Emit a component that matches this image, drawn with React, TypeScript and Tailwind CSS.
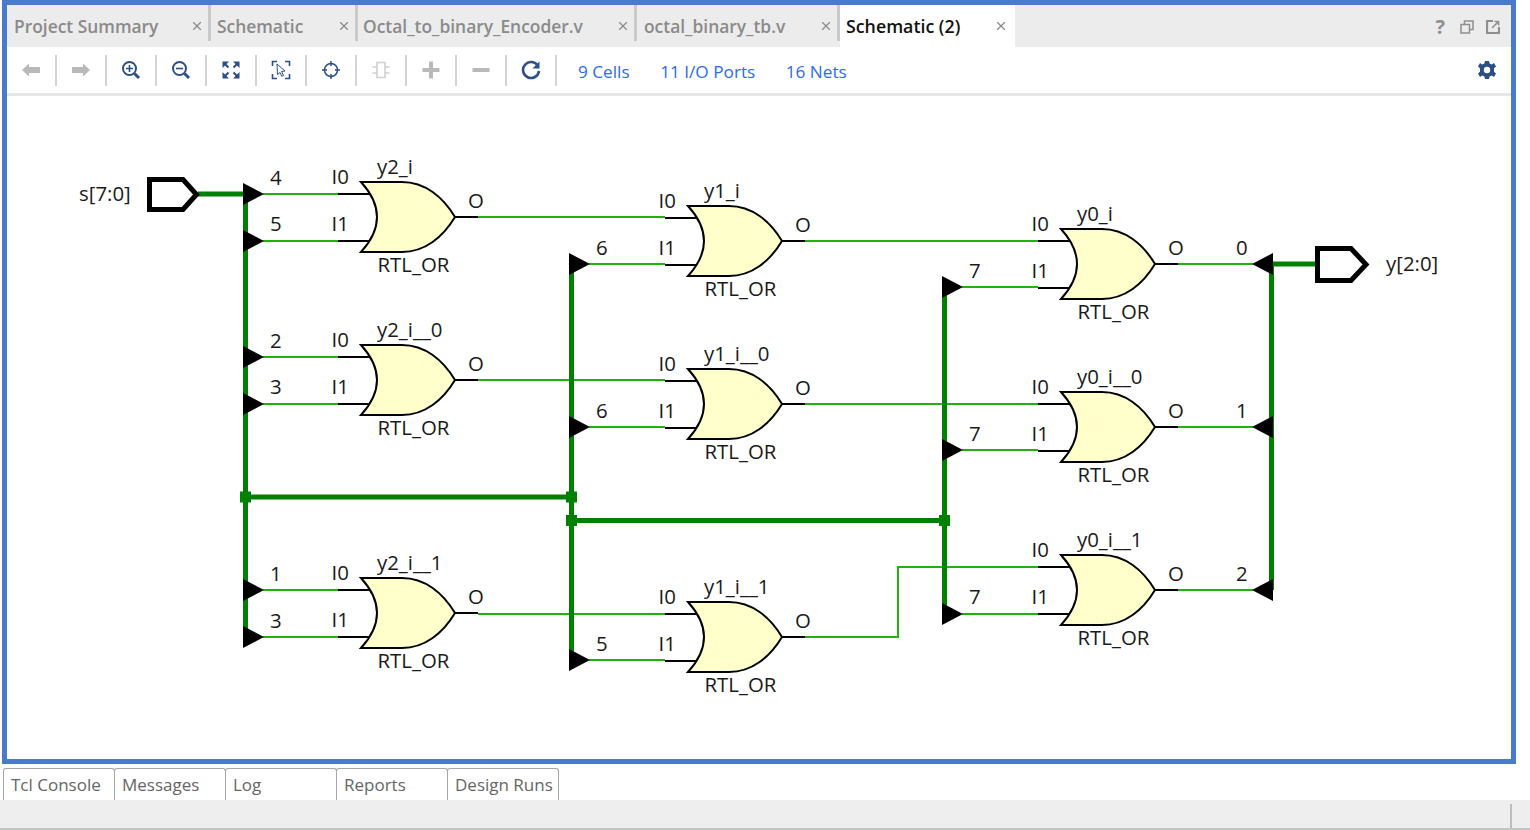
import type { ReactNode } from "react";
import { X } from "lucide-react";

const font = "font-['Open_Sans','Noto_Sans',sans-serif]";

const topTabs = [
  { label: "Project Summary", width: "w-[204px] pl-[7px]" },
  { label: "Schematic", width: "w-[147px] pl-[6px]" },
  { label: "Octal_to_binary_Encoder.v", width: "w-[279px] pl-[5px]" },
  { label: "octal_binary_tb.v", width: "w-[203px] pl-[7px]" },
];

const bottomTabs = ["Tcl Console", "Messages", "Log", "Reports", "Design Runs"];

const gates = [
  { name: "y2_i", x: 0, y: 0 },
  { name: "y2_i__0", x: 0, y: 163 },
  { name: "y2_i__1", x: 0, y: 396 },
  { name: "y1_i", x: 327, y: 24 },
  { name: "y1_i__0", x: 327, y: 187 },
  { name: "y1_i__1", x: 327, y: 420 },
  { name: "y0_i", x: 700, y: 47 },
  { name: "y0_i__0", x: 700, y: 210 },
  { name: "y0_i__1", x: 700, y: 373 },
];

const thin = "#22b20f";
const thick = "#008000";

// thin nets, in page coordinates
const nets = [
  "M263 194H338", "M263 241H338", "M263 357H338", "M263 404H338", "M263 590H338", "M263 637H338",
  "M478 217H665", "M478 380H665", "M478 614H665",
  "M589 264H665", "M589 427H665", "M589 660H665",
  "M805 241H1038", "M805 404H1038", "M805 637H898V567H1038",
  "M962 287H1038", "M962 450H1038", "M962 614H1038",
  "M1178 264H1253", "M1178 427H1253", "M1178 590H1253",
];

const buses = [
  "M198 194H245.5", "M245.5 194V637", "M245.5 497H571.5", "M571.5 264V660",
  "M571.5 520.5H944.5", "M944.5 287V614", "M1271.5 264V590", "M1271.5 264H1316",
];

const inTris = [
  [243, 194], [243, 241], [243, 357], [243, 404], [243, 590], [243, 637],
  [569, 264], [569, 427], [569, 660],
  [942, 287], [942, 450], [942, 614],
];

const outTris = [264, 427, 590];

const labels: [string, number, number][] = [
  ["4", 270, 185], ["5", 270, 231], ["2", 270, 348], ["3", 270, 394], ["1", 270, 581], ["3", 270, 628],
  ["6", 596, 255], ["6", 596, 418], ["5", 596, 651],
  ["7", 969, 278], ["7", 969, 441], ["7", 969, 604],
  ["0", 1236, 255], ["1", 1236, 418], ["2", 1236, 581],
  ["s[7:0]", 79, 201], ["y[2:0]", 1386, 271],
];

function Gate({ name, x, y }: { name: string; x: number; y: number }) {
  return (
    <g transform={`translate(${x} ${y})`}>
      <path d="M338 194H372M338 241H372M455 217H478" stroke="#000" strokeWidth="2" fill="none" />
      <path
        d="M361 182H402C425 182 443 197 455 217C443 237 425 252 402 252H361C372 240 377 229 377 217C377 205 372 194 361 182Z"
        fill="#ffffcc"
        stroke="#000"
        strokeWidth="2"
      />
      <text x="331.5" y="184">I0</text>
      <text x="331.5" y="231">I1</text>
      <text x="468" y="208">O</text>
      <text x="377" y="174">{name}</text>
      <text x="377.5" y="272">RTL_OR</text>
    </g>
  );
}

function Schematic() {
  return (
    <svg viewBox="7 96 1504 663" className="block w-[1504px] h-[663px]" fontSize="20.4" fill="#1a1a1a">
      {nets.map((d) => (
        <path key={d} d={d} stroke={thin} strokeWidth="2" fill="none" />
      ))}
      {buses.map((d) => (
        <path key={d} d={d} stroke={thick} strokeWidth="5" fill="none" />
      ))}
      {[[245.5, 497], [571.5, 497], [571.5, 520.5], [944.5, 520.5]].map(([cx, cy]) => (
        <rect key={`${cx}-${cy}`} x={cx - 5.5} y={cy - 5.5} width="11" height="11" fill={thick} />
      ))}
      {inTris.map(([tx, ty]) => (
        <path key={`${tx}-${ty}`} d={`M${tx} ${ty - 11}L${tx + 21} ${ty}L${tx} ${ty + 11}Z`} fill="#000" />
      ))}
      {outTris.map((ty) => (
        <path key={ty} d={`M1273 ${ty - 11}L1252 ${ty}L1273 ${ty + 11}Z`} fill="#000" />
      ))}
      <path d="M149.5 179.5H183L196.5 194.5L183 209.5H149.5Z" fill="#fff" stroke="#000" strokeWidth="5" />
      <path d="M1317.5 248.5H1351L1366 264.5L1351 280.5H1317.5Z" fill="#fff" stroke="#000" strokeWidth="5" />
      {gates.map((g) => (
        <Gate key={g.name} {...g} />
      ))}
      {labels.map(([t, x, y]) => (
        <text key={`${t}-${x}-${y}`} x={x} y={y}>
          {t}
        </text>
      ))}
    </svg>
  );
}

function ToolIcon({ children }: { children: ReactNode }) {
  return (
    <div className="flex w-[50px] h-[31px] items-center justify-center border-r-2 border-[#d4d4d4]">
      <svg viewBox="0 0 20 20" className="w-5 h-5">
        {children}
      </svg>
    </div>
  );
}

const navy = "#2d4f87";
const dim = "#b9b9b9";

function Toolbar() {
  return (
    <div className="flex h-[46px] items-center bg-white">
      <div className="flex items-center">
        <ToolIcon>
          <path d="M1 10L8 3.5V7H19V13H8V16.5Z" fill={dim} />
        </ToolIcon>
        <ToolIcon>
          <path d="M19 10L12 3.5V7H1V13H12V16.5Z" fill={dim} />
        </ToolIcon>
        <ToolIcon>
          <circle cx="8.5" cy="8.5" r="6.5" fill="none" stroke={navy} strokeWidth="2" />
          <path d="M8.5 5V12M5 8.5H12" stroke={navy} strokeWidth="1.6" />
          <path d="M13.5 13.5L18 18" stroke={navy} strokeWidth="3" />
        </ToolIcon>
        <ToolIcon>
          <circle cx="8.5" cy="8.5" r="6.5" fill="none" stroke={navy} strokeWidth="2" />
          <path d="M5 8.5H12" stroke={navy} strokeWidth="1.6" />
          <path d="M13.5 13.5L18 18" stroke={navy} strokeWidth="3" />
        </ToolIcon>
        <ToolIcon>
          <path d="M1.5 1.5H8L1.5 8ZM18.5 1.5V8L12 1.5ZM1.5 18.5V12L8 18.5ZM18.5 18.5H12L18.5 12Z" fill={navy} />
          <path d="M3.5 3.5L7.5 7.5M16.5 3.5L12.5 7.5M3.5 16.5L7.5 12.5M16.5 16.5L12.5 12.5" stroke={navy} strokeWidth="2" />
        </ToolIcon>
        <ToolIcon>
          <path d="M1.5 6V1.5H6M14 1.5H18.5V6M1.5 14V18.5H6M14 18.5H18.5V14" fill="none" stroke={navy} strokeWidth="1.6" />
          <path d="M6 4L14 11L10.5 11.5L12.5 15.5L10.8 16.3L9 12.5L6.5 14.5Z" fill="#fff" stroke={navy} strokeWidth="1" />
        </ToolIcon>
        <ToolIcon>
          <circle cx="10" cy="10" r="6.5" fill="none" stroke={navy} strokeWidth="1.5" />
          <path d="M10 1V6M10 14V19M1 10H6M14 10H19" stroke={navy} strokeWidth="1.5" />
        </ToolIcon>
        <ToolIcon>
          <path d="M6 2.5H14V17.5H6ZM1.5 7H6M1.5 13H6M14 7H18.5M14 13H18.5" fill="none" stroke="#d0d0d0" strokeWidth="1.6" />
        </ToolIcon>
        <ToolIcon>
          <path d="M10 1.5V18.5M1.5 10H18.5" stroke={dim} strokeWidth="4" />
        </ToolIcon>
        <ToolIcon>
          <path d="M1.5 10H18.5" stroke={dim} strokeWidth="4" />
        </ToolIcon>
        <ToolIcon>
          <path d="M17 6A8 8 0 1 0 18 11" fill="none" stroke={navy} strokeWidth="2.6" />
          <path d="M18.5 1.5V8.5H11.5Z" fill={navy} />
        </ToolIcon>
      </div>
      <div className="flex ml-[21px] mt-[3px] gap-[30.5px] text-[17.2px] text-[#2b6cf0]">
        <span>9 Cells</span>
        <span>11 I/O Ports</span>
        <span>16 Nets</span>
      </div>
      <svg viewBox="0 0 20 20" className="ml-auto mr-[14px] w-[20px] h-[20px]">
        <path
          d="M8 1H12L12.6 3.6L14.8 4.5L17 3L19 6.4L17 8.2V11.8L19 13.6L17 17L14.8 15.5L12.6 16.4L12 19H8L7.4 16.4L5.2 15.5L3 17L1 13.6L3 11.8V8.2L1 6.4L3 3L5.2 4.5L7.4 3.6Z"
          fill={navy}
        />
        <circle cx="10" cy="10" r="3.2" fill="#fff" />
      </svg>
    </div>
  );
}

export default function App() {
  return (
    <div className={`w-[1530px] h-[830px] bg-white overflow-hidden flex flex-col ${font}`}>
      <div className="ml-[2px] w-[1514px] h-[764px] border-[5px] border-[#4a7acb] flex flex-col shrink-0">
        <div className="flex h-[42px] bg-[#ececec] shrink-0">
          {topTabs.map((t) => (
            <div
              key={t.label}
              className={`${t.width} h-[36px] flex items-center justify-between pr-[4px] border-r-[3px] border-[#c9c9c9] font-semibold text-[17.4px] text-[#8a8a8a]`}
            >
              <span className="mt-[7px]">{t.label}</span>
              <X className="w-[14px] h-[14px] mt-[6px]" strokeWidth={2} />
            </div>
          ))}
          <div className="w-[175px] flex items-center justify-between pl-[6px] pr-[7px] bg-white font-semibold text-[17.8px] text-[#111]">
            <span className="mt-[1px]">Schematic (2)</span>
            <X className="w-[14px] h-[14px] text-[#8a8a8a]" strokeWidth={2} />
          </div>
          <div className="ml-auto flex items-center gap-[12px] pr-[11px] text-[#8f8f8f]">
            <span className="font-bold text-[20px] mt-[2px] mr-[3px]">?</span>
            <svg viewBox="0 0 14 14" className="w-[14px] h-[14px] mt-[2px]">
              <path d="M4.5 4V1H13V9.5H10M1 4.5H9.5V13H1Z" fill="none" stroke="currentColor" strokeWidth="1.5" />
            </svg>
            <svg viewBox="0 0 14 14" className="w-[14px] h-[14px] mt-[2px]">
              <path d="M7 1H1V13H13V7" fill="none" stroke="currentColor" strokeWidth="2.2" />
              <path d="M6 8L12 2M8.5 1.5H12.5V5.5" fill="none" stroke="currentColor" strokeWidth="1.6" />
            </svg>
          </div>
        </div>
        <Toolbar />
        <div className="h-[3px] bg-[#e6e6e6] shrink-0" />
        <Schematic />
      </div>
      <div className="flex ml-[3px] mt-[4px] h-[32px] shrink-0">
        {bottomTabs.map((t) => (
          <div
            key={t}
            className="w-[112px] -mr-px px-[7px] pt-[3px] border border-b-0 border-[#a6a6a6] rounded-t-[3px] text-[17px] text-[#666] whitespace-nowrap overflow-hidden"
          >
            {t}
          </div>
        ))}
      </div>
      <div className="flex-1 flex justify-end pt-[4px] bg-[#eeeeee] border-b-2 border-[#c4c4c4]">
        <div className="w-[2px] mr-[18px] bg-[#bdbdbd]" />
      </div>
    </div>
  );
}
